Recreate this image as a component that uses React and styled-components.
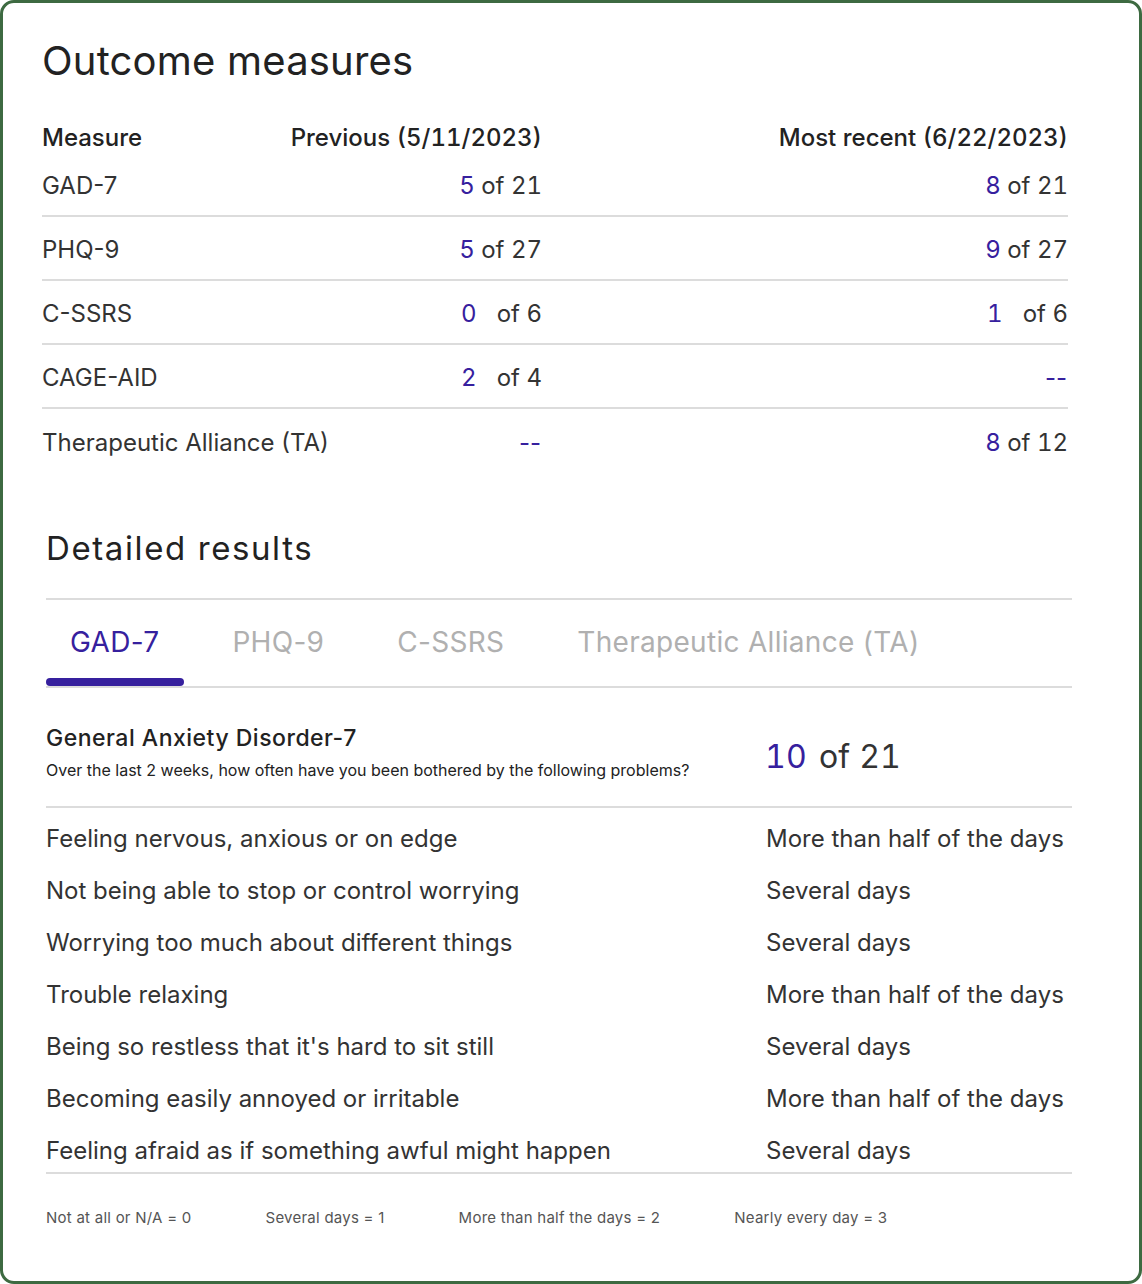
import React, { useState } from 'react';
import styled, { createGlobalStyle } from 'styled-components';

const Global = createGlobalStyle`
  html, body { margin: 0; padding: 0; background: #fff; }
  body { font-family: Inter, "Noto Sans", sans-serif; color: #333; }
  *, *::before, *::after { box-sizing: border-box; }
`;

const PURPLE = '#36209e';
const LINE = '#dcdcdc';

const Card = styled.div`
  width: 1142px;
  height: 1284px;
  border: 3px solid #3d6a41;
  border-radius: 14px;
  padding: 34px 71px 0 39px;
  background: #fff;
`;

const Title = styled.h1`
  margin: 0;
  font-size: 40px;
  line-height: 48px;
  font-weight: 400;
  letter-spacing: 0.2px;
  color: #222;
`;

const Table = styled.div`
  margin-top: 36px;
  display: grid;
  grid-template-columns: 290px 210px 1fr;
`;

const HeadCell = styled.div`
  height: 32px;
  display: flex;
  align-items: center;
  justify-content: ${(p) => (p.$right ? 'flex-end' : 'flex-start')};
  white-space: nowrap;
  font-size: 24px;
  font-weight: 500;
  font-variant-numeric: tabular-nums;
  color: #222;
`;

const Cell = styled.div`
  height: 64px;
  padding-top: 2px;
  display: flex;
  align-items: center;
  justify-content: ${(p) => (p.$right ? 'flex-end' : 'flex-start')};
  white-space: nowrap;
  font-size: 24px;
  color: #333;
  border-bottom: ${(p) => (p.$last ? 'none' : `2px solid ${LINE}`)};
`;

const Score = styled.span`
  display: inline-flex;
  align-items: baseline;
  font-variant-numeric: tabular-nums;
`;

const Num = styled.span`
  color: ${PURPLE};
  min-width: 22px;
`;

const Of = styled.span`
  min-width: 59px;
  text-align: right;
`;

const Dash = styled.span`
  color: ${PURPLE};
  padding-right: 1px;
`;

const Detail = styled.section`
  margin: 55px -4px 0 4px;
`;

const SubTitle = styled.h2`
  margin: 0;
  font-size: 33px;
  line-height: 40px;
  font-weight: 400;
  letter-spacing: 1.6px;
  color: #222;
`;

const TabList = styled.div`
  margin-top: 30px;
  display: flex;
  gap: 24px;
  border-top: 2px solid ${LINE};
  border-bottom: 2px solid ${LINE};
`;

const Tab = styled.button`
  all: unset;
  cursor: pointer;
  display: flex;
  flex-direction: column;
  align-items: stretch;
  padding-top: 25px;
  font-family: Inter, "Noto Sans", sans-serif;
  font-size: 28px;
  line-height: 34px;
  letter-spacing: 0.3px;
  color: ${(p) => (p.$active ? PURPLE : '#b0b0b0')};
`;

const TabLabel = styled.span`
  padding: 0 25px 0 24px;
`;

const Indicator = styled.span`
  margin-top: 19px;
  height: 8px;
  border-radius: 4px;
  background: ${(p) => (p.$active ? PURPLE : 'transparent')};
`;

const QHeader = styled.div`
  display: grid;
  grid-template-columns: 719px 1fr;
  padding: 36px 0 26px;
  border-bottom: 2px solid ${LINE};
`;

const QTitle = styled.div`
  font-size: 23px;
  line-height: 28px;
  font-weight: 500;
  letter-spacing: 0.5px;
  color: #222;
`;

const QDesc = styled.div`
  margin-top: 8px;
  font-size: 16px;
  line-height: 20px;
  color: #222;
`;

const BigScore = styled.div`
  align-self: center;
  padding-top: 10px;
  font-size: 32px;
  line-height: 40px;
  letter-spacing: 0.2px;
  font-variant-numeric: tabular-nums;
  color: #333;
  & > span { color: ${PURPLE}; margin-right: 12px; }
`;

const Items = styled.div`
  display: grid;
  grid-template-columns: 720px 1fr;
  grid-auto-rows: 44px;
  row-gap: 8px;
  padding-top: 8px;
  border-bottom: 2px solid ${LINE};
`;

const ItemCell = styled.div`
  display: flex;
  align-items: center;
  white-space: nowrap;
  font-size: 24px;
  color: #333;
`;

const Legend = styled.div`
  margin-top: 34px;
  display: flex;
  gap: 74px;
  font-size: 15px;
  line-height: 20px;
  letter-spacing: 0.25px;
  color: #555;
`;

const measures = [
  { name: 'GAD-7', prev: [5, 21], recent: [8, 21] },
  { name: 'PHQ-9', prev: [5, 27], recent: [9, 27] },
  { name: 'C-SSRS', prev: [0, 6], recent: [1, 6] },
  { name: 'CAGE-AID', prev: [2, 4], recent: null },
  { name: 'Therapeutic Alliance (TA)', prev: null, recent: [8, 12] },
];

const tabs = ['GAD-7', 'PHQ-9', 'C-SSRS', 'Therapeutic Alliance (TA)'];

const items = [
  ['Feeling nervous, anxious or on edge', 'More than half of the days'],
  ['Not being able to stop or control worrying', 'Several days'],
  ['Worrying too much about different things', 'Several days'],
  ['Trouble relaxing', 'More than half of the days'],
  ["Being so restless that it's hard to sit still", 'Several days'],
  ['Becoming easily annoyed or irritable', 'More than half of the days'],
  ['Feeling afraid as if something awful might happen', 'Several days'],
];

const legend = [
  'Not at all or N/A = 0',
  'Several days = 1',
  'More than half the days = 2',
  'Nearly every day = 3',
];

function ScoreView({ v }) {
  if (!v) return <Dash>--</Dash>;
  return (
    <Score>
      <Num>{v[0]}</Num>
      <Of>of {v[1]}</Of>
    </Score>
  );
}

export default function App() {
  const [active, setActive] = useState(0);
  return (
    <>
      <Global />
      <Card>
        <Title>Outcome measures</Title>
        <Table>
          <HeadCell>Measure</HeadCell>
          <HeadCell $right>Previous (5/11/2023)</HeadCell>
          <HeadCell $right>Most recent (6/22/2023)</HeadCell>
          {measures.map((m, i) => {
            const last = i === measures.length - 1;
            return (
              <React.Fragment key={m.name}>
                <Cell $last={last}>{m.name}</Cell>
                <Cell $last={last} $right>
                  <ScoreView v={m.prev} />
                </Cell>
                <Cell $last={last} $right>
                  <ScoreView v={m.recent} />
                </Cell>
              </React.Fragment>
            );
          })}
        </Table>

        <Detail>
          <SubTitle>Detailed results</SubTitle>
          <TabList>
            {tabs.map((t, i) => (
              <Tab key={t} $active={i === active} onClick={() => setActive(i)}>
                <TabLabel>{t}</TabLabel>
                <Indicator $active={i === active} />
              </Tab>
            ))}
          </TabList>
          <QHeader>
            <div>
              <QTitle>General Anxiety Disorder-7</QTitle>
              <QDesc>
                Over the last 2 weeks, how often have you been bothered by the following problems?
              </QDesc>
            </div>
            <BigScore>
              <span>10</span>of 21
            </BigScore>
          </QHeader>
          <Items>
            {items.map(([q, a]) => (
              <React.Fragment key={q}>
                <ItemCell>{q}</ItemCell>
                <ItemCell>{a}</ItemCell>
              </React.Fragment>
            ))}
          </Items>
          <Legend>
            {legend.map((l) => (
              <span key={l}>{l}</span>
            ))}
          </Legend>
        </Detail>
      </Card>
    </>
  );
}
